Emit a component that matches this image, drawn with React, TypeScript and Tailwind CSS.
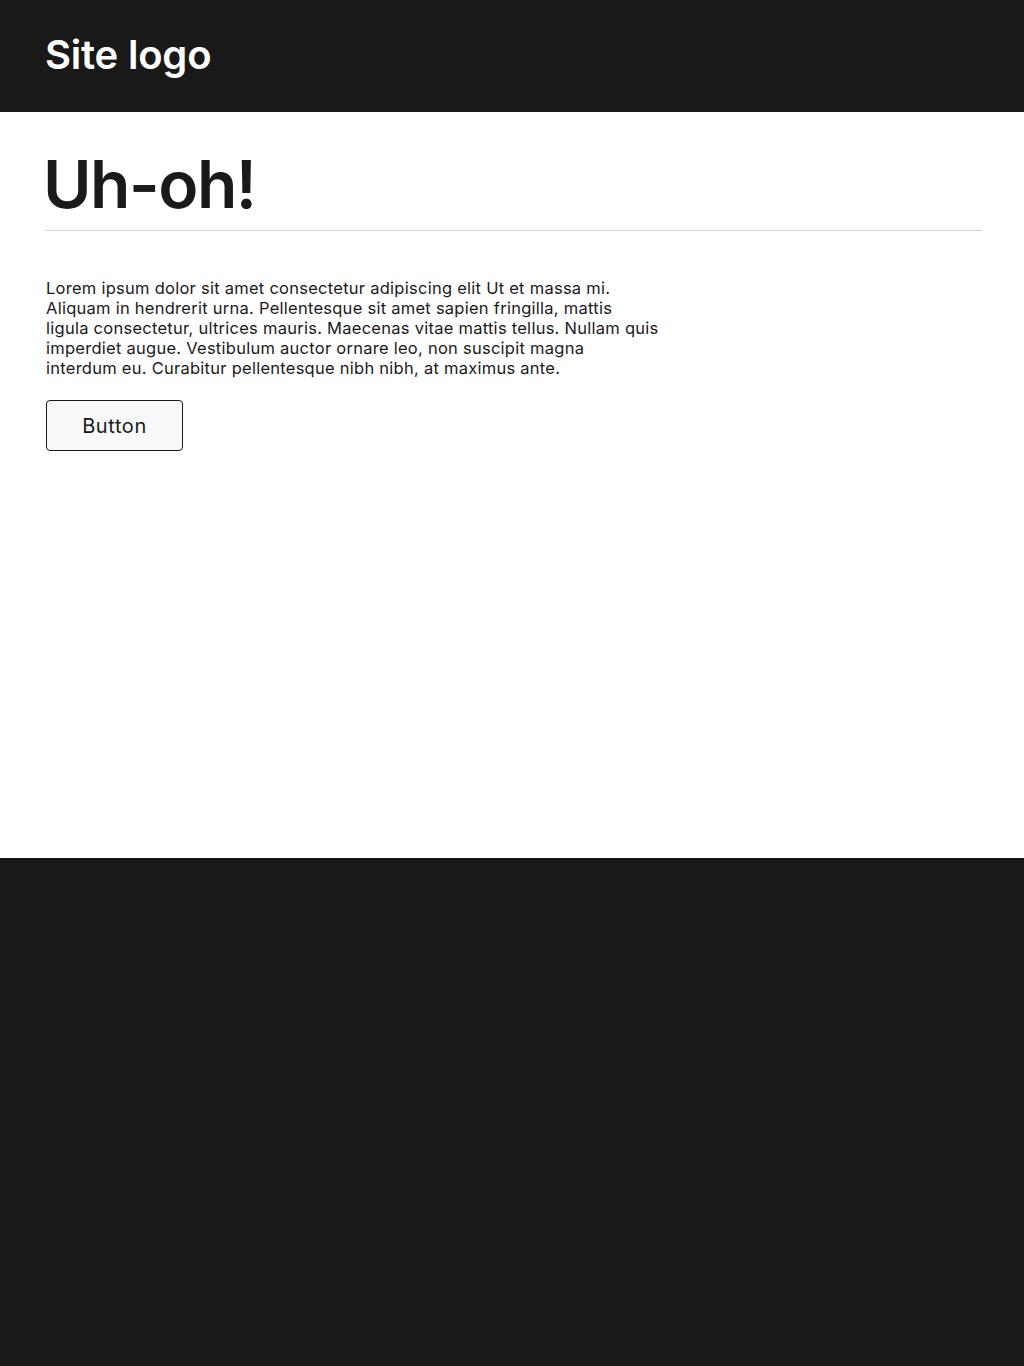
const lines = [
  "Lorem ipsum dolor sit amet consectetur adipiscing elit Ut et massa mi.",
  "Aliquam in hendrerit urna. Pellentesque sit amet sapien fringilla, mattis",
  "ligula consectetur, ultrices mauris. Maecenas vitae mattis tellus. Nullam quis",
  "imperdiet augue. Vestibulum auctor ornare leo, non suscipit magna",
  "interdum eu. Curabitur pellentesque nibh nibh, at maximus ante.",
];

export default function App() {
  return (
    <div className="min-h-[1366px] flex flex-col bg-[#191919]">
      <header className="h-[112px] bg-[#191919] flex items-center px-[45px]">
        <span className="text-white text-[40px] font-semibold tracking-[-0.2px] font-['Inter','Liberation_Sans',sans-serif] leading-none pb-[2px]">
          Site logo
        </span>
      </header>
      <main className="bg-white h-[746px] pl-[45px] pr-[42px] pt-[34px]">
        <h1 className="text-[#1a1a1a] text-[66px] font-semibold tracking-[-1.5px] leading-[76px] -ml-[2px] font-['Inter','Liberation_Sans',sans-serif]">
          Uh-oh!
        </h1>
        <div className="mt-[8px] h-px bg-[#d4d4d4]" />
        <p className="mt-[47px] ml-px text-[#1a1a1a] text-[16.5px] tracking-[0.26px] leading-[20px] font-['Inter','Liberation_Sans',sans-serif]">
          {lines.map((l) => (
            <span key={l} className="block whitespace-nowrap">
              {l}
            </span>
          ))}
        </p>
        <button className="mt-[22px] ml-px w-[137px] h-[51px] border border-[#1a1a1a] rounded-[4px] bg-[#f8f9fb] text-[#1a1a1a] text-[20px] tracking-[0.6px] font-['Inter','Liberation_Sans',sans-serif]">
          Button
        </button>
      </main>
      <footer className="flex-1 bg-[#191919]" />
    </div>
  );
}
